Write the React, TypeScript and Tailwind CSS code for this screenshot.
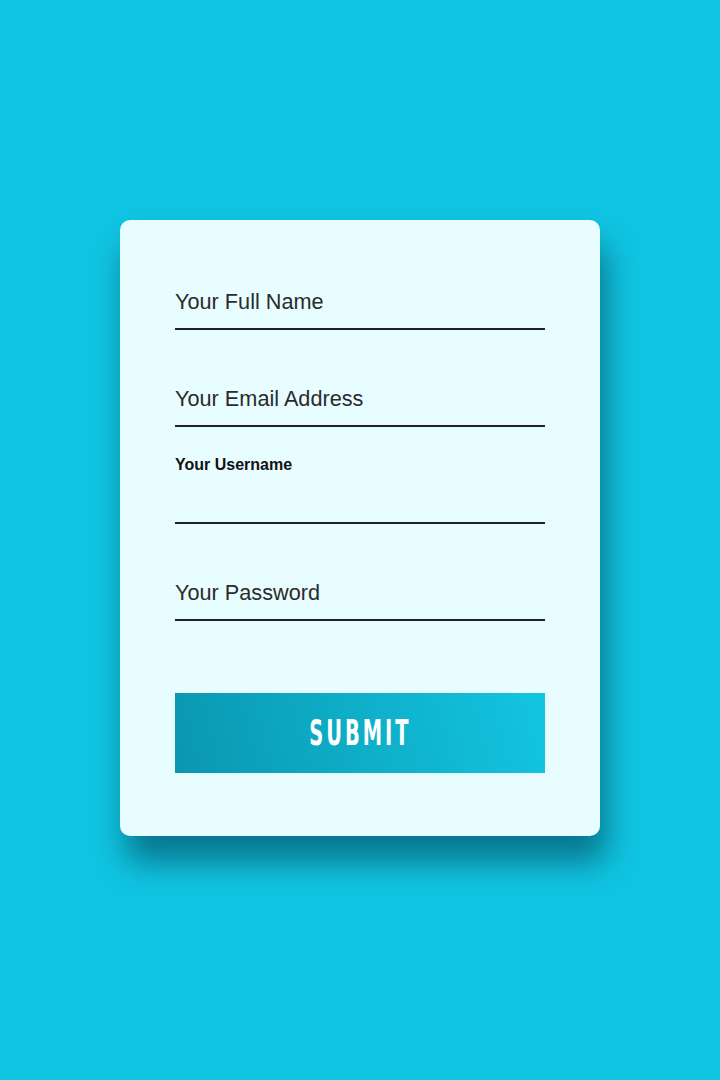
import React from 'react';

const fields = [
  { name: 'fullname', label: 'Your Full Name', type: 'text', floated: false },
  { name: 'email', label: 'Your Email Address', type: 'email', floated: false },
  { name: 'username', label: 'Your Username', type: 'text', floated: true },
  { name: 'password', label: 'Your Password', type: 'password', floated: false },
];

const App: React.FC = () => {
  return (
    <div className="min-h-screen w-full bg-[#10c5e2] pt-[220px] font-['Liberation_Sans',Arial,sans-serif]">
      <form
        className="mx-auto w-[480px] rounded-[10px] bg-[#e8fdff] px-[55px] pt-[40px] pb-[63px] shadow-[6px_26px_32px_rgba(0,40,60,0.5)]"
        onSubmit={(e) => e.preventDefault()}
      >
        <div className="flex flex-col gap-[27px]">
          {fields.map((f) => (
            <label
              key={f.name}
              className={`flex h-[70px] flex-col border-b-2 border-[#222] ${
                f.floated ? 'justify-start' : 'justify-end pb-[13px]'
              }`}
            >
              {f.floated ? (
                <span className="text-[16px] font-bold leading-[22px] text-[#111]">{f.label}</span>
              ) : (
                <span className="text-[21.7px] leading-[26px] text-[#2b2b2b]">{f.label}</span>
              )}
            </label>
          ))}
        </div>
        <button
          type="submit"
          className="mt-[72px] flex h-[80px] w-full items-center justify-center bg-linear-[75deg] from-[#0a97b0] to-[#13c5e1]"
        >
          <span className="inline-block scale-x-[0.6] text-[36px] font-bold leading-none tracking-[5px] text-white [font-stretch:condensed] font-['DejaVu_Sans_Condensed','DejaVu_Sans',sans-serif]">
            SUBMIT
          </span>
        </button>
      </form>
    </div>
  );
};

export default App;
